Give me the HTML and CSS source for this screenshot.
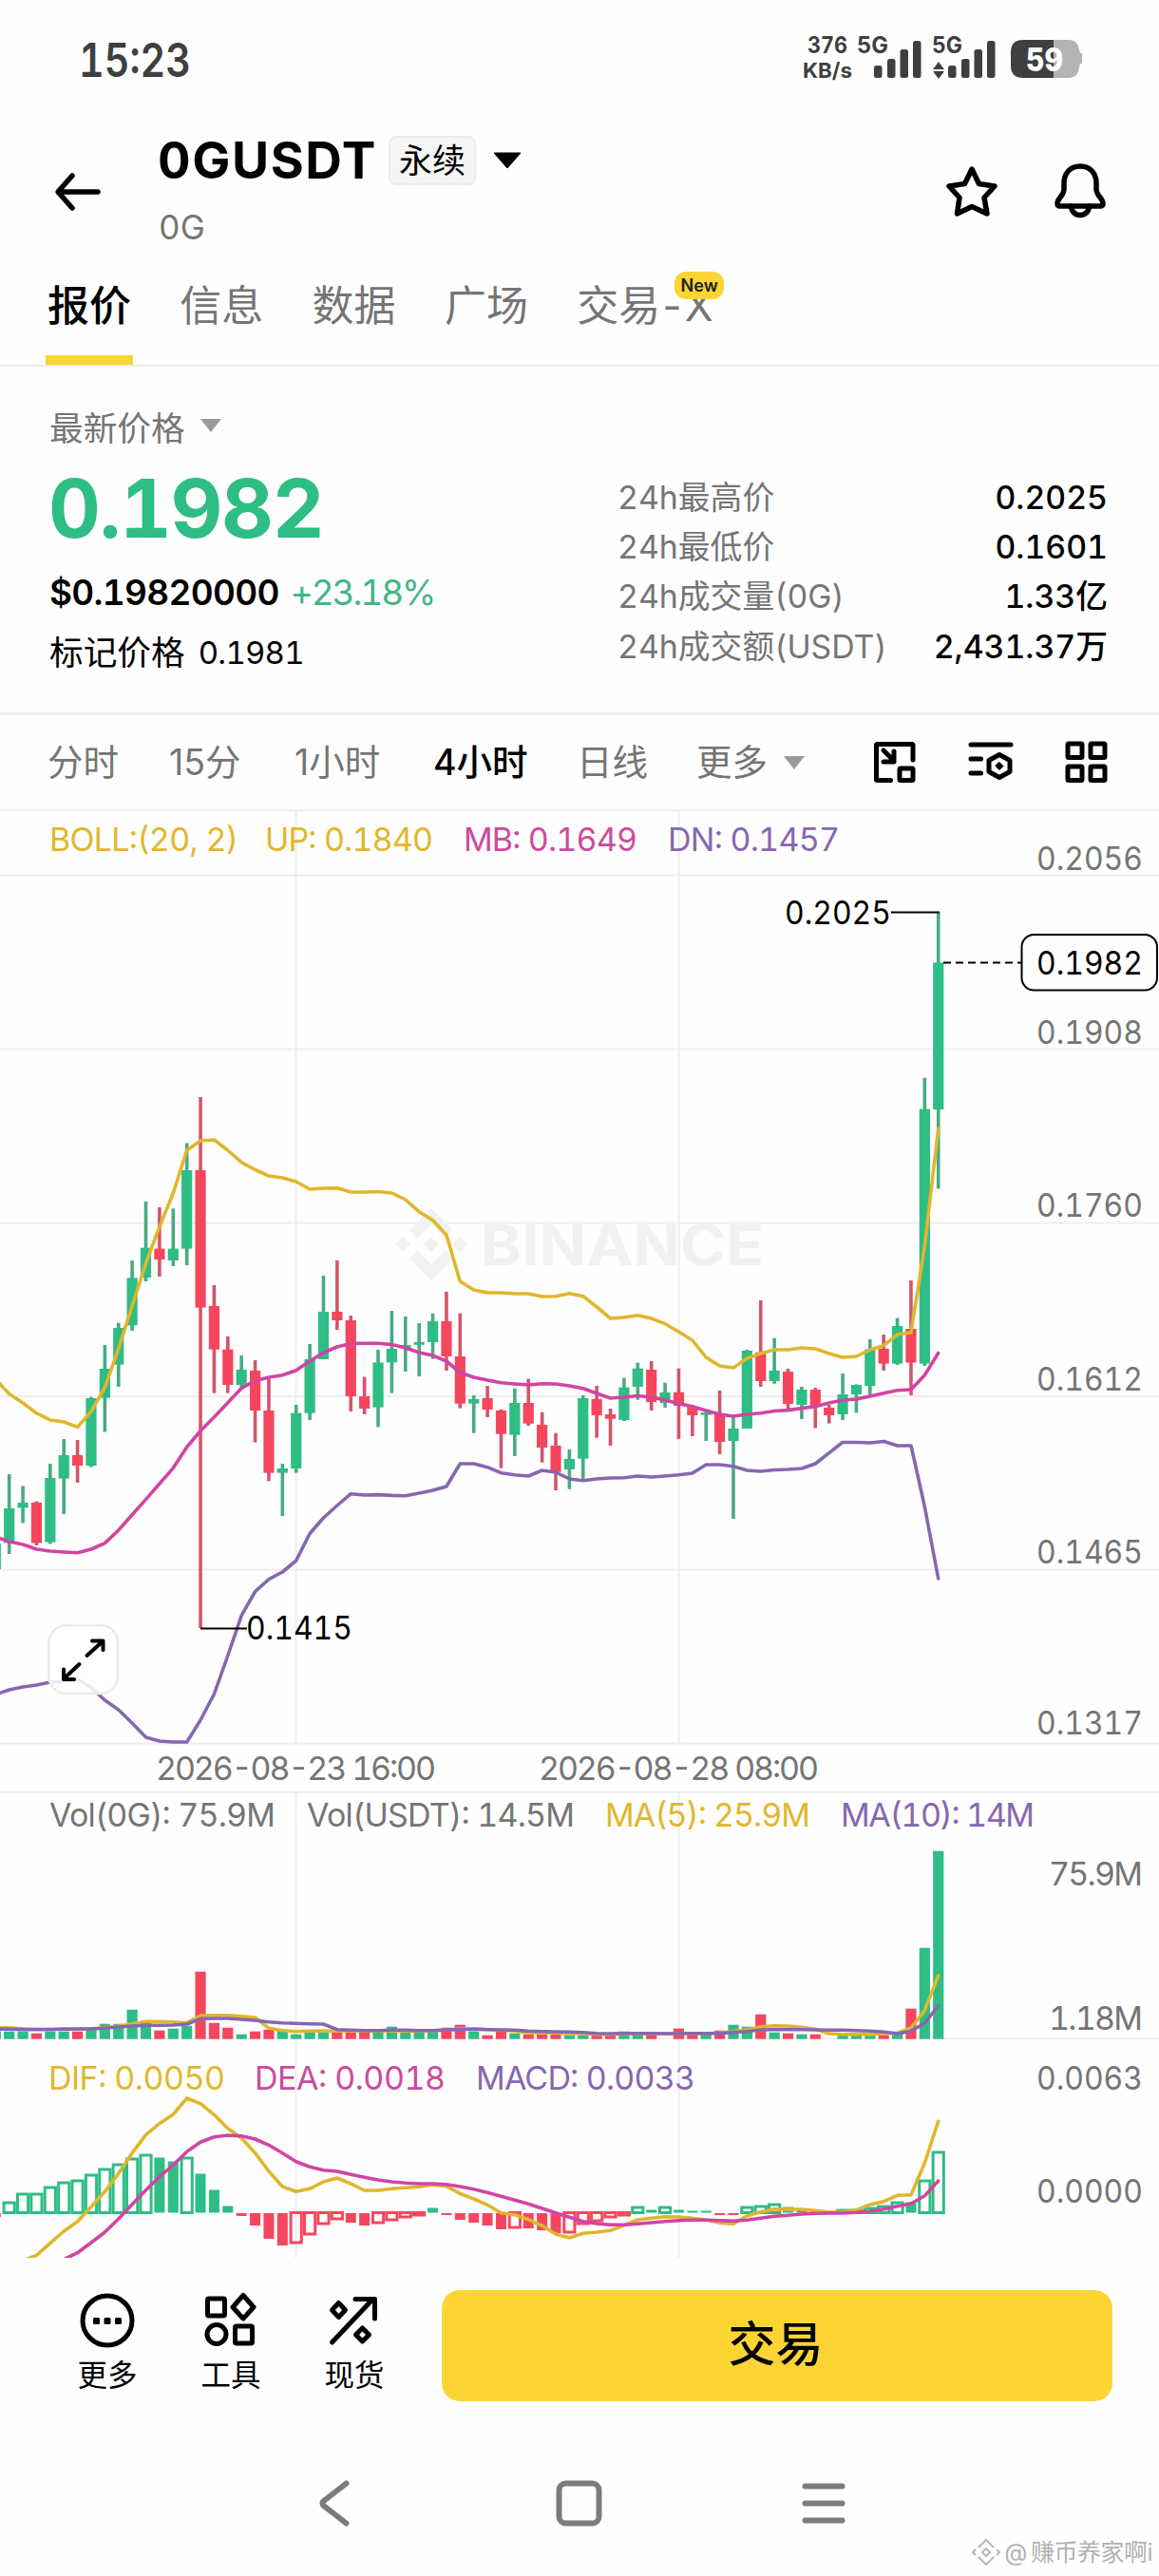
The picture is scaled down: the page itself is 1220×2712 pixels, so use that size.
FILE: index.html
```html
<!DOCTYPE html>
<html lang="zh-CN">
<head>
<meta charset="utf-8">
<title>0GUSDT 永续</title>
<link rel="stylesheet" href="styles.css">
</head>
<body>
<div class="screen">
  <div class="status">
    <svg width="1220" height="110" viewBox="0 0 1220 110">
      <g class="status-text">
        <text x="83" y="81" font-size="49" font-weight="600" textLength="118" lengthAdjust="spacingAndGlyphs">15:23</text>
        <text x="850" y="56" font-size="24" textLength="42" lengthAdjust="spacingAndGlyphs">376</text>
        <text x="845" y="82" font-size="22" textLength="52" lengthAdjust="spacingAndGlyphs">KB/s</text>
        <text x="902" y="56" font-size="24" textLength="33" lengthAdjust="spacingAndGlyphs">5G</text>
        <text x="981" y="56" font-size="24" textLength="32" lengthAdjust="spacingAndGlyphs">5G</text>
      </g>
      <g fill="#3f3f3f">
        <rect x="920" y="69" width="8.5" height="13" rx="2.5"/><rect x="934" y="62" width="8.5" height="20" rx="2.5"/>
        <rect x="947.5" y="52" width="8.5" height="30" rx="2.5"/><rect x="961" y="43" width="8.5" height="39" rx="2.5"/>
        <rect x="998" y="69" width="8.5" height="13" rx="2.5"/><rect x="1012" y="62" width="8.5" height="20" rx="2.5"/>
        <rect x="1025.500" y="52" width="8.500" height="30" rx="2.5"/><rect x="1039" y="43" width="8.500" height="39" rx="2.500"/>
        <path d="M988 65l6 8h-12zM988 83l6-8h-12z"/>
      </g>
      <path d="M1109 42h16q8 0 10 7l2 7h2v11h-2l-2 8q-2 7-10 7h-16z" fill="#b3b3b3"/>
      <path d="M1109 42h-32q-13 0-13 13v14q0 13 13 13h32z" fill="#3f3f3f"/>
      <text class="battery" x="1080" y="75" font-size="34" textLength="39" lengthAdjust="spacingAndGlyphs">59</text>
    </svg>
  </div>

  <header class="header">
    <svg class="back" width="52" height="44" viewBox="0 0 52 44"><path d="M20 5L5 22L20 39M6 22H47"/></svg>
    <div class="pair">
      <div class="pair-line">
        <h1>0GUSDT</h1><span class="tag">永续</span>
        <svg width="30" height="18" viewBox="0 0 30 18"><path d="M1 1h28L15 17z" stroke="#000" stroke-linejoin="round"/></svg>
      </div>
      <div class="pair-sub">0G</div>
    </div>
    <svg class="line-icon star" width="56" height="56" viewBox="0 0 56 56"><path d="M28 4L35.500 19.500L52 22L41 34L44 51L28 43.500L12.500 51L15 34L4 22L20.500 19.500Z"/></svg>
    <svg class="line-icon bell" width="56" height="60" viewBox="0 0 56 60"><path d="M28 4C17 4 11 12 11 22V28C11 35 4 38 4 43Q4 46 7 46H49Q52 46 52 43C52 38 45 35 45 28V22C45 12 39 4 28 4Z"/><path d="M18.500 46a9.500 9.500 0 0 0 19 0"/></svg>
  </header>

  <nav class="tabs">
    <span class="tab active">报价</span><span class="tab">信息</span><span class="tab">数据</span><span class="tab">广场</span><span class="tab">交易<i>-</i>X<b class="new">New</b></span>
  </nav>

  <section class="summary">
    <div class="quote">
      <div class="quote-label">最新价格 <svg width="24" height="16" viewBox="0 0 24 16"><path d="M1 1h22L12 15z"/></svg></div>
      <div class="quote-price">0.1982</div>
      <div class="quote-usd"><b>$0.19820000</b><span>+23.18%</span></div>
      <div class="quote-mark"><span>标记价格</span><span class="num">0.1981</span></div>
    </div>
    <dl class="stats">
      <div><dt>24h最高价</dt><dd>0.2025</dd></div>
      <div><dt>24h最低价</dt><dd>0.1601</dd></div>
      <div><dt>24h成交量(0G)</dt><dd>1.33亿</dd></div>
      <div><dt>24h成交额(USDT)</dt><dd>2,431.37万</dd></div>
    </dl>
  </section>

  <nav class="frames">
    <span>分时</span><span>15分</span><span>1小时</span><span class="active">4小时</span><span>日线</span><span>更多</span>
    <svg class="caret" width="24" height="16" viewBox="0 0 24 16"><path d="M1 1h22L12 15z"/></svg>
    <svg class="tool pip" width="46" height="46" viewBox="0 0 46 46"><path d="M18.500 41.500H4.500Q3.500 41.500 3.500 40.500V4.500Q3.500 3.500 4.500 3.500H41Q42 3.500 42 4.500V20"/><path d="M11 10L22 21M22 11V22H11"/><rect x="28" y="29" width="14" height="12.500" rx="1"/></svg>
    <svg class="tool settings" width="48" height="46" viewBox="0 0 48 46"><path d="M3 4H45M3 19H13.500M3 34H13.500"/><path d="M33 14.500L44 20.500V32.500L33 38.500L22 32.500V20.500Z"/><path d="M33 22.500L37 26.500L33 30.500L29 26.500Z" fill="#000" stroke-width="1"/></svg>
    <svg class="tool grid" width="46" height="46" viewBox="0 0 46 46"><rect x="3" y="3" width="15" height="14.500" rx="1"/><rect x="27" y="3" width="15" height="14.500" rx="1"/><rect x="3" y="27" width="15" height="14.500" rx="1"/><rect x="27" y="27" width="15" height="14.500" rx="1"/></svg>
  </nav>

  <section class="charts">
    <svg class="panel" width="1220" height="1034" viewBox="0 852 1220 1034">
      <g class="rules">
        <path d="M0 853H1220M0 921.500H1220M0 1104.500H1220M0 1287.500H1220M0 1470H1220M0 1652.500H1220M0 1835.500H1220M311.500 853V1835M714.500 853V1835"/>
      </g>
      <g fill="#f1f1f1">
        <path d="M454 1272L477 1295L468.500 1303.500L454 1289L439.500 1303.500L431 1295Z"/>
        <path d="M454 1348L477 1325L468.500 1316.500L454 1331L439.500 1316.500L431 1325Z"/>
        <path d="M416 1310l8-8l8 8l-8 8zM446 1310l8-8l8 8l-8 8zM476 1310l8-8l8 8l-8 8z"/>
        <text x="506" y="1332" font-size="59" font-weight="700" textLength="298" lengthAdjust="spacingAndGlyphs">BINANCE</text>
      </g>
      <g id="candles"></g>
      <g id="bands" class="curves"></g>
      <g class="legend">
        <text class="gold" x="52" y="896" textLength="199">BOLL:(20, 2)</text>
        <text class="gold" x="279" y="896" textLength="177">UP: 0.1840</text>
        <text class="pink" x="488" y="896" textLength="183">MB: 0.1649</text>
        <text class="violet" x="703" y="896" textLength="181">DN: 0.1457</text>
      </g>
      <g class="axis">
        <text x="1091" y="915.500" textLength="112" lengthAdjust="spacingAndGlyphs">0.2056</text>
        <text x="1091" y="1098.500" textLength="112" lengthAdjust="spacingAndGlyphs">0.1908</text>
        <text x="1091" y="1281" textLength="112" lengthAdjust="spacingAndGlyphs">0.1760</text>
        <text x="1091" y="1463.500" textLength="112" lengthAdjust="spacingAndGlyphs">0.1612</text>
        <text x="1091" y="1646" textLength="112" lengthAdjust="spacingAndGlyphs">0.1465</text>
        <text x="1091" y="1826" textLength="112" lengthAdjust="spacingAndGlyphs">0.1317</text>
        <text x="164" y="1874" textLength="295">2026-08-23 16:00</text>
        <text x="567" y="1874" textLength="295">2026-08-28 08:00</text>
      </g>
      <g class="marker">
        <path d="M938 960.500H989M211 1714.500H260"/>
        <path d="M993 1013.500H1075" stroke-dasharray="8 5"/>
        <rect x="1075.500" y="984" width="142.500" height="58.500" rx="13"/>
        <text x="826" y="973" textLength="112" lengthAdjust="spacingAndGlyphs">0.2025</text>
        <text x="259" y="1726" textLength="112" lengthAdjust="spacingAndGlyphs">0.1415</text>
        <text x="1091" y="1026" textLength="112" lengthAdjust="spacingAndGlyphs">0.1982</text>
      </g>
      <g class="expand">
        <rect x="51.500" y="1711" width="72.500" height="72" rx="18"/>
        <path d="M91.500 1743L107.500 1728.500M97 1727.500H108.500V1737M83.500 1752L67.500 1767M67 1757.500V1768H78"/>
      </g>
    </svg>
    <svg class="panel" width="1220" height="261" viewBox="0 1886 1220 261">
      <path class="rules" d="M0 1886.500H1220M0 2146.500H1220M311.500 1886V2147M714.500 1886V2147"/>
      <g id="volume"></g>
      <g id="volume-ma" class="curves"></g>
      <g class="legend">
        <text class="gray" x="52" y="1922.500" textLength="238">Vol(0G): 75.9M</text>
        <text class="gray" x="323" y="1922.500" textLength="282">Vol(USDT): 14.5M</text>
        <text class="gold" x="637" y="1922.500" textLength="216">MA(5): 25.9M</text>
        <text class="violet" x="885" y="1922.500" textLength="204">MA(10): 14M</text>
      </g>
      <g class="axis">
        <text x="1104" y="1985" textLength="99">75.9M</text>
        <text x="1104" y="2136.500" textLength="99">1.18M</text>
      </g>
    </svg>
    <svg class="panel" width="1220" height="230" viewBox="0 2147 1220 230">
      <path class="rules" d="M311.500 2147V2377M714.500 2147V2377"/>
      <g id="macd"></g>
      <g id="macd-lines" class="curves"></g>
      <g class="legend">
        <text class="gold" x="51" y="2199.500" textLength="186">DIF: 0.0050</text>
        <text class="pink" x="268" y="2199.500" textLength="201">DEA: 0.0018</text>
        <text class="violet" x="501" y="2199.500" textLength="231">MACD: 0.0033</text>
      </g>
      <g class="axis">
        <text x="1091" y="2199.500" textLength="112" lengthAdjust="spacingAndGlyphs">0.0063</text>
        <text x="1091" y="2319" textLength="112" lengthAdjust="spacingAndGlyphs">0.0000</text>
      </g>
    </svg>
  </section>

  <footer class="actions">
    <div class="action"><svg width="64" height="64" viewBox="0 0 64 64"><circle cx="32" cy="32" r="26"/><g fill="#000" stroke="none"><rect x="17" y="29" width="7" height="7" rx="1.500"/><rect x="28.500" y="29" width="7" height="7" rx="1.500"/><rect x="40" y="29" width="7" height="7" rx="1.500"/></g></svg><span>更多</span></div>
    <div class="action"><svg width="64" height="64" viewBox="0 0 64 64"><rect x="7.500" y="9" width="18" height="18" rx="1.500"/><path d="M45 5.500L56 18L45 30L34 18Z"/><circle cx="17" cy="46.500" r="10"/><rect x="36.500" y="38" width="18" height="18" rx="1.500"/></svg><span>工具</span></div>
    <div class="action"><svg width="64" height="64" viewBox="0 0 64 64"><path d="M8.500 55L51 10M33 9.500H53.500V30M15.500 13.500L22.500 21L15.500 28.500L8.500 21ZM40.500 40L47.500 47L40.500 54L33.500 47Z"/></svg><span>现货</span></div>
    <button class="trade">交易</button>
  </footer>

  <div class="system-nav">
    <svg width="1220" height="80" viewBox="0 2595 1220 80">
      <g fill="none" stroke="#7c7c7c" stroke-width="6" stroke-linecap="round" stroke-linejoin="round">
        <path d="M364.500 2614.500L342 2632Q337 2635.500 342 2639L364.500 2656.500"/>
        <rect x="588.500" y="2614.500" width="42" height="42" rx="7"/>
        <path d="M847.500 2617.500H886.500M847.500 2635.500H886.500M847.500 2653.500H886.500"/>
      </g>
    </svg>
  </div>
  <div class="credit">
    <svg width="30" height="30" viewBox="0 0 30 30"><path d="M7 10l8-8l8 8M7 20l8 8l8-8M15 11l4 4l-4 4l-4-4zM4 12l-3 3l3 3M26 12l3 3l-3 3"/></svg>
    <span>@</span><span>赚币养家啊i</span>
  </div>
</div>
<script src="chart.js"></script>
</body>
</html>
```
FILE: styles.css
```css
* { box-sizing: border-box; }
body { margin: 0; background: #fefefe; color: #000; font-family: Inter, "Noto Sans CJK SC", sans-serif; font-feature-settings: "tnum"; }
h1, dl, dt, dd { margin: 0; }
svg { display: block; flex: none; }
.screen { width: 1220px; height: 2712px; overflow: hidden; position: relative; display: flex; flex-direction: column; }
.screen > * { flex: none; }

.status { height: 110px; }
.status-text { font-family: Inter, sans-serif; font-weight: 700; fill: #3f3f3f; }
.battery { fill: #fff; font-weight: 800; }

.header { height: 176px; display: flex; align-items: flex-start; padding-left: 56px; }
.back { margin-top: 70px; fill: none; stroke: #000; stroke-width: 5.5; stroke-linecap: round; stroke-linejoin: round; }
.pair { margin-left: 58px; width: 829px; }
.pair-line { display: flex; align-items: center; height: 118px; }
h1 { font-size: 53.5px; font-weight: 700; line-height: 60px; letter-spacing: 1.6px; width: 230px; white-space: nowrap; }
.tag { margin: 0 18px 0 13px; width: 92px; height: 52px; line-height: 48px; border: 2px solid #ececec; border-radius: 8px; background: #f5f5f5; font-size: 35px; text-align: center; }
.pair-sub { margin-top: -10px; padding-left: 1px; font-size: 35px; line-height: 42px; color: #757575; }
.line-icon { fill: none; stroke: #000; stroke-width: 5.5; stroke-linejoin: round; stroke-linecap: round; }
.star { margin-top: 64px; }
.bell { margin: 61px 0 0 58px; }

.tabs { height: 100px; display: flex; gap: 49.8px; padding-left: 48px; border-bottom: 2px solid #ebebeb; }
.tab { position: relative; height: 98px; padding: 0 2px; line-height: 73px; font-size: 44px; color: #757575; white-space: nowrap; margin-right: -2.5px; }
.tab i { font-style: normal; margin: 0 -1px 0 -2px; }
.tab.active { color: #000; font-weight: 500; border-bottom: 10px solid #fcd535; }
.new { position: absolute; left: 105px; top: 0; width: 52px; height: 29px; border-radius: 12px; background: #fcd535; color: #202020; font-size: 18px; font-weight: 600; line-height: 29px; text-align: center; }

.summary { height: 367px; display: flex; padding-left: 52px; border-bottom: 3px solid #f0f0f0; }
.quote { width: 598px; }
.quote-label { display: flex; align-items: center; gap: 15px; height: 50px; margin-top: 37px; font-size: 35.7px; color: #757575; }
.quote-label svg, .caret { fill: #9a9a9a; }
.quote-price { height: 110px; line-height: 110px; margin-top: 8px; font-size: 85px; font-weight: 700; letter-spacing: -1.4px; margin-left: -1px; color: #2ebd85; }
.quote-usd { display: flex; gap: 12px; height: 50px; line-height: 50px; margin-top: 8px; font-size: 37px; letter-spacing: -0.7px; }
.quote-usd b { font-weight: 600; }
.quote-usd span { color: #42b687; letter-spacing: -2.1px; }
.quote-mark { display: flex; gap: 14px; height: 50px; line-height: 50px; margin-top: 13px; font-size: 35.7px; }
.quote-mark .num { font-size: 33px; letter-spacing: -0.8px; }
.stats { width: 516px; margin-top: 112px; }
.stats div { display: flex; justify-content: space-between; height: 52.2px; line-height: 52px; font-size: 33.8px; white-space: nowrap; }
.stats dt { color: #757575; }
.stats dd { font-weight: 500; }

.frames { height: 99px; display: flex; align-items: center; padding-left: 50px; font-size: 37.5px; color: #757575; white-space: nowrap; font-feature-settings: normal; }
.frames span { width: 128px; padding-bottom: 6px; }
.frames .active { color: #000; font-weight: 500; width: 151px; }
.frames span:nth-child(2) { width: 132px; }
.frames span:nth-child(3) { width: 146px; }
.frames span:nth-child(5) { width: 126px; }
.frames span:nth-child(6) { width: 91px; }
.tool { fill: none; stroke: #000; stroke-width: 5; stroke-linecap: round; stroke-linejoin: round; }
.pip { margin-left: 71px; }
.settings { margin-left: 54px; }
.grid { margin-left: 54px; }

.charts { height: 1525px; }
.rules { fill: none; stroke: #ededed; stroke-width: 2; }
.curves { fill: none; stroke-width: 3.6; stroke-linejoin: round; stroke-linecap: round; }
.legend, .axis, .marker { font-size: 34px; }
.axis { fill: #757575; }
.gray { fill: #757575; stroke: none; }
text.gold { fill: #e1b72c; }
text.pink { fill: #cc4a9d; }
text.violet { fill: #8767ae; }
polyline.gold { stroke: #e0b62c; }
polyline.pink { stroke: #d244a3; }
polyline.violet { stroke: #8767b0; }
.marker path, .marker rect { fill: none; stroke: #000; stroke-width: 2; }
.marker rect { fill: #fefefe; }
.expand rect { fill: #ffffffd9; stroke: #ebebeb; stroke-width: 2.5; }
.expand path { fill: none; stroke: #000; stroke-width: 4; stroke-linecap: round; stroke-linejoin: round; }

.actions { height: 189px; display: flex; padding: 34px 0 0 48px; }
.action { width: 130px; display: flex; flex-direction: column; align-items: center; font-size: 31.5px; line-height: 44px; }
.action svg { fill: none; stroke: #000; stroke-width: 5; stroke-linecap: round; stroke-linejoin: round; }
.action span { margin-top: 4px; }
.trade { margin-left: 27px; width: 706px; height: 117px; border: 0; border-radius: 19px; background: #fcd535; font: 500 50px/110px Inter, "Noto Sans CJK SC", sans-serif; color: #000; padding: 0 3px 3px 0; }

.system-nav { margin-top: 29px; height: 80px; }
.credit { position: absolute; right: 7px; bottom: 7px; display: flex; align-items: center; gap: 4px; font-size: 25px; line-height: 36px; letter-spacing: -0.5px; color: #b2b2b2; white-space: nowrap; }
.credit svg { fill: none; stroke: #b8b8b8; stroke-width: 2; }
```
FILE: chart.js
```js
const NS = "http://www.w3.org/2000/svg";
const STEP = 14.383;
const UP = "#2ebd85";
const DOWN = "#f6465d";
const x = i => -4.7 + STEP * i;

function add(id, tag, attrs) {
  const el = document.createElementNS(NS, tag);
  for (const k in attrs) el.setAttribute(k, attrs[k]);
  document.getElementById(id).appendChild(el);
}
function rect(id, left, top, width, height, fill, extra) {
  add(id, "rect", Object.assign({ x: left, y: top, width, height, fill }, extra));
}
function curve(id, name, values, toY, from = 0) {
  const points = values.map((v, i) => x(i + from).toFixed(1) + "," + toY(v).toFixed(1)).join(" ");
  add(id, "polyline", { class: name, points });
}

// direction, high, body top, body bottom, low
const candles = `g 1620 1625 1652 1652|g 1552 1588 1624.5 1636|g 1564.4 1582 1587.4 1603.4|r 1580.5 1582 1624.5 1627|g 1541 1556 1623.6 1625.5
g 1515 1532 1556.6 1594|r 1516 1532 1543 1561|g 1470.7 1472 1543 1544.6|g 1416 1441 1471.6 1507.5|g 1392.7 1398 1436.7 1460
g 1327 1345.4 1395.4 1401|g 1265 1313.7 1345 1349|r 1271 1314.6 1326 1344|g 1272.4 1314.6 1327 1333|g 1203.5 1232 1314.6 1332
r 1155 1232 1376.6 1714|r 1353 1375 1420.7 1466.6|r 1407 1420.7 1458 1466.6|g 1427 1442 1458 1462.5|r 1432 1443 1485 1518.5
r 1451.4 1485 1550.6 1559.4|g 1541 1546 1550.6 1596|g 1479 1487.7 1546 1550.6|g 1415 1431 1487.7 1495|g 1343 1381 1431 1431
r 1327 1381 1390 1400|r 1385 1390 1470 1486|r 1449.6 1470 1483 1489|g 1421 1434.4 1481.7 1502.4|g 1380 1420 1434.4 1466.6
g 1386 1416 1419 1444|g 1393 1413 1415.7 1449|g 1382.7 1391 1413 1430.7|r 1360 1391 1428 1443|r 1382.7 1428 1477.7 1482.7
g 1469 1473 1477.7 1508.7|r 1459 1472 1484 1492|r 1483.7 1485 1509.7 1545.7|g 1461.7 1477 1510.7 1533|r 1451.7 1477 1498.7 1501
r 1486.7 1500 1524 1539.7|r 1508.7 1522 1549.7 1569|g 1526 1536 1547 1567.7|g 1469 1472 1535.7 1559|r 1459 1473 1490 1513.7
r 1483 1489 1493.7 1522|g 1450.7 1460.7 1495 1496|g 1434.7 1440.7 1460 1473.7|r 1433 1442 1476 1485|g 1455.7 1466 1477 1482
r 1440.7 1465.7 1480 1515|r 1479 1480.7 1490 1512|g 1486 1487 1489.7 1517|r 1464 1488 1518 1531|g 1491.7 1504 1517 1599
g 1421 1422 1504 1504|r 1369 1423.7 1454 1460|g 1408.7 1443 1454 1456.7|r 1441 1444 1478 1485|g 1460 1463 1479 1494
r 1461 1463 1481 1503.5|r 1479 1482 1490 1498.6|g 1446 1468 1489 1495|g 1457.4 1458 1468 1487.5|g 1410 1420.6 1459 1469.5
r 1405 1420 1435.6 1443|g 1387.6 1396 1435.6 1437|r 1348 1399 1434.6 1469|g 1134.6 1167.6 1435.6 1438|g 960.6 1013.4 1168 1251.4`
  .split(/[|\n]/).map(c => c.trim().split(" "));
const directions = candles.map(c => c[0]);

candles.forEach(([dir, high, top, bottom, low], i) => {
  rect("candles", x(i) - 1.8, +high, 3.6, low - high, dir === "g" ? "#48ab82" : "#d2566a");
  rect("candles", x(i) - 5.6, +top, 11.2, bottom - top, dir === "g" ? UP : DOWN);
});

const same = v => v;
curve("bands", "gold", [1452, 1467.5, 1477, 1487.7, 1495, 1497, 1502.4, 1486, 1460.6, 1420, 1375, 1330, 1291.6, 1256, 1211, 1201, 1200, 1211, 1223.7, 1231.5, 1238, 1240, 1244, 1252, 1251, 1250.8, 1255, 1255, 1254.5, 1256, 1263, 1275.7, 1284.7, 1300, 1349, 1358, 1361, 1361, 1362, 1362, 1365, 1364.7, 1361.7, 1364.7, 1376, 1388, 1387, 1384.7, 1388, 1393.7, 1402, 1411, 1429, 1438, 1440, 1430, 1425, 1421, 1421, 1419, 1420, 1425, 1429, 1428, 1421, 1416.7, 1405, 1403, 1312, 1188], same);
curve("bands", "pink", [1618, 1623, 1626, 1631, 1633, 1634, 1634.7, 1631, 1624.6, 1611, 1594.7, 1578.6, 1562, 1545.6, 1523.5, 1506.5, 1492, 1476.7, 1461.5, 1453.7, 1450, 1447.8, 1442.7, 1433, 1424, 1418, 1414.5, 1414.3, 1414.3, 1415.6, 1419, 1424, 1427, 1433, 1445, 1450, 1453, 1455.7, 1457, 1458, 1456.7, 1457, 1459, 1461.7, 1467, 1472, 1471, 1469.5, 1471, 1474, 1477.7, 1480.7, 1485, 1489, 1491, 1489, 1487.7, 1485.5, 1484.6, 1482.6, 1480.7, 1477, 1474, 1473, 1470, 1466.7, 1463.7, 1463, 1447.7, 1424.5], same);
curve("bands", "violet", [1784, 1779, 1776, 1774, 1771, 1769.7, 1768, 1776.6, 1790, 1800, 1814, 1829, 1833, 1834, 1834, 1811, 1783.5, 1743, 1700.8, 1675.5, 1662.7, 1655, 1643, 1614.5, 1598, 1585, 1572.7, 1574, 1573.6, 1574.4, 1574.7, 1572, 1569, 1565, 1541, 1541, 1544.7, 1550.7, 1552.7, 1554, 1548, 1550, 1557, 1558.7, 1557, 1556, 1555.7, 1554, 1555, 1554, 1552.7, 1551, 1542, 1542, 1543.7, 1548, 1549, 1547.5, 1547, 1546, 1541, 1529.6, 1518.5, 1518.5, 1519, 1517.5, 1522, 1522, 1586, 1662], same);

// volume bar heights
[8, 8, 8, 6, 8, 8, 8, 10, 16, 16, 31, 18, 9, 11, 14, 71, 17, 12, 5, 8, 10, 10, 5, 8, 8, 7, 7, 7, 8, 13, 8, 8, 8, 12, 15, 8, 4, 9, 6, 5, 5, 5, 4, 4, 5, 5, 8, 6, 6, 0, 11, 6, 5, 9, 15, 13, 26, 7, 6, 5, 5, 0, 4, 4, 4, 4, 6, 32, 96, 198]
  .forEach((h, i) => rect("volume", x(i) - 5.6, 2146.7 - h, 11.2, h, directions[i] === "g" ? UP : DOWN));

const volumeY = v => 1830 + v / 3;
curve("volume-ma", "gold", [914, 914, 917, 919, 919, 918, 919, 917, 914, 910, 902, 895, 895, 896, 899, 876, 875, 875, 878, 882, 916, 923, 926, 925, 924, 925, 925, 925, 925, 925, 925, 925, 924, 921, 918, 917, 920, 922, 925, 930, 931, 931, 933, 933, 935, 935, 934, 933, 933, 933, 933, 932, 932, 931, 926, 921, 911, 908, 909, 913, 919, 933, 935, 935, 935, 933, 931, 915, 860, 750], volumeY);
curve("volume-ma", "violet", [918, 919, 920, 920, 920, 919, 918, 918, 916, 912, 909, 907, 907, 906, 903, 886, 885, 885, 888, 891, 896, 899, 901, 902, 903, 920, 922, 923, 923, 922, 922, 923, 923, 921, 920, 919, 920, 921, 922, 925, 926, 927, 928, 929, 932, 933, 932, 932, 932, 933, 933, 932, 932, 932, 929, 926, 921, 920, 920, 920, 921, 922, 922, 923, 925, 928, 933, 925, 900, 845], volumeY);

// MACD histogram: signed height; "h" marks an outlined bar
"-4 12h 21h 21h 28h 33h 35h 41h 47h 52h 58h 62h 58 54 59h 41 24 7 -3 -13 -27 -34 -33h -24h -13h -8h -10 -13 -12h -9h -6h -4h 5 -2 -7 -10 -13 -17 -17h -16 -18 -21 -22h -13h -10h -6h -4h 7h 3 7h 3 2 2 -2 -2 7h 8h 10h 6 4 2 2 4h 4h 6h 8h 12h 11 35h 65h"
  .split(" ").forEach((v, i) => {
    const n = parseFloat(v);
    const h = Math.abs(n);
    const color = n > 0 ? UP : DOWN;
    const base = 2329.5;
    if (v.endsWith("h")) {
      const top = n > 0 ? base + 1.5 - h : base;
      rect("macd", x(i) - 5.6, top, 11.2, Math.max(h - 1.5, 1), "none", { stroke: color, "stroke-width": 3 });
    } else {
      rect("macd", x(i) - 5.5, n > 0 ? base - h : base + 0.5, 11, h, color);
    }
  });

const macdY = v => 2150 + v / 3;
curve("macd-lines", "gold", [720, 700, 690, 673, 635, 597, 566, 520, 472, 415, 350, 293, 257, 228, 177, 194, 229, 272, 303, 350, 408, 456, 472, 463, 441, 429, 447, 468, 468, 463, 460, 457, 451, 455, 478, 495, 514, 539, 545, 560, 580, 606, 618, 604, 600, 595, 578, 561, 556, 551, 552, 556, 561, 571, 574, 548, 536, 527, 528, 528, 532, 537, 537, 530, 513, 503, 484, 482, 382, 250], macdY);
curve("macd-lines", "pink", [686, 665, 633, 600, 558, 512, 467, 425, 388, 346, 316, 299, 294, 296, 306, 325, 350, 377, 394, 404, 408, 418, 427, 435, 441, 445, 447, 447, 449, 456, 464, 475, 487, 499, 511, 525, 539, 553, 566, 573, 577, 577, 574, 570, 566, 563, 562, 562, 563, 565, 562, 556, 550, 547, 543, 541, 540, 540, 538, 534, 527, 518, 510, 485, 438], macdY, 5);
```
